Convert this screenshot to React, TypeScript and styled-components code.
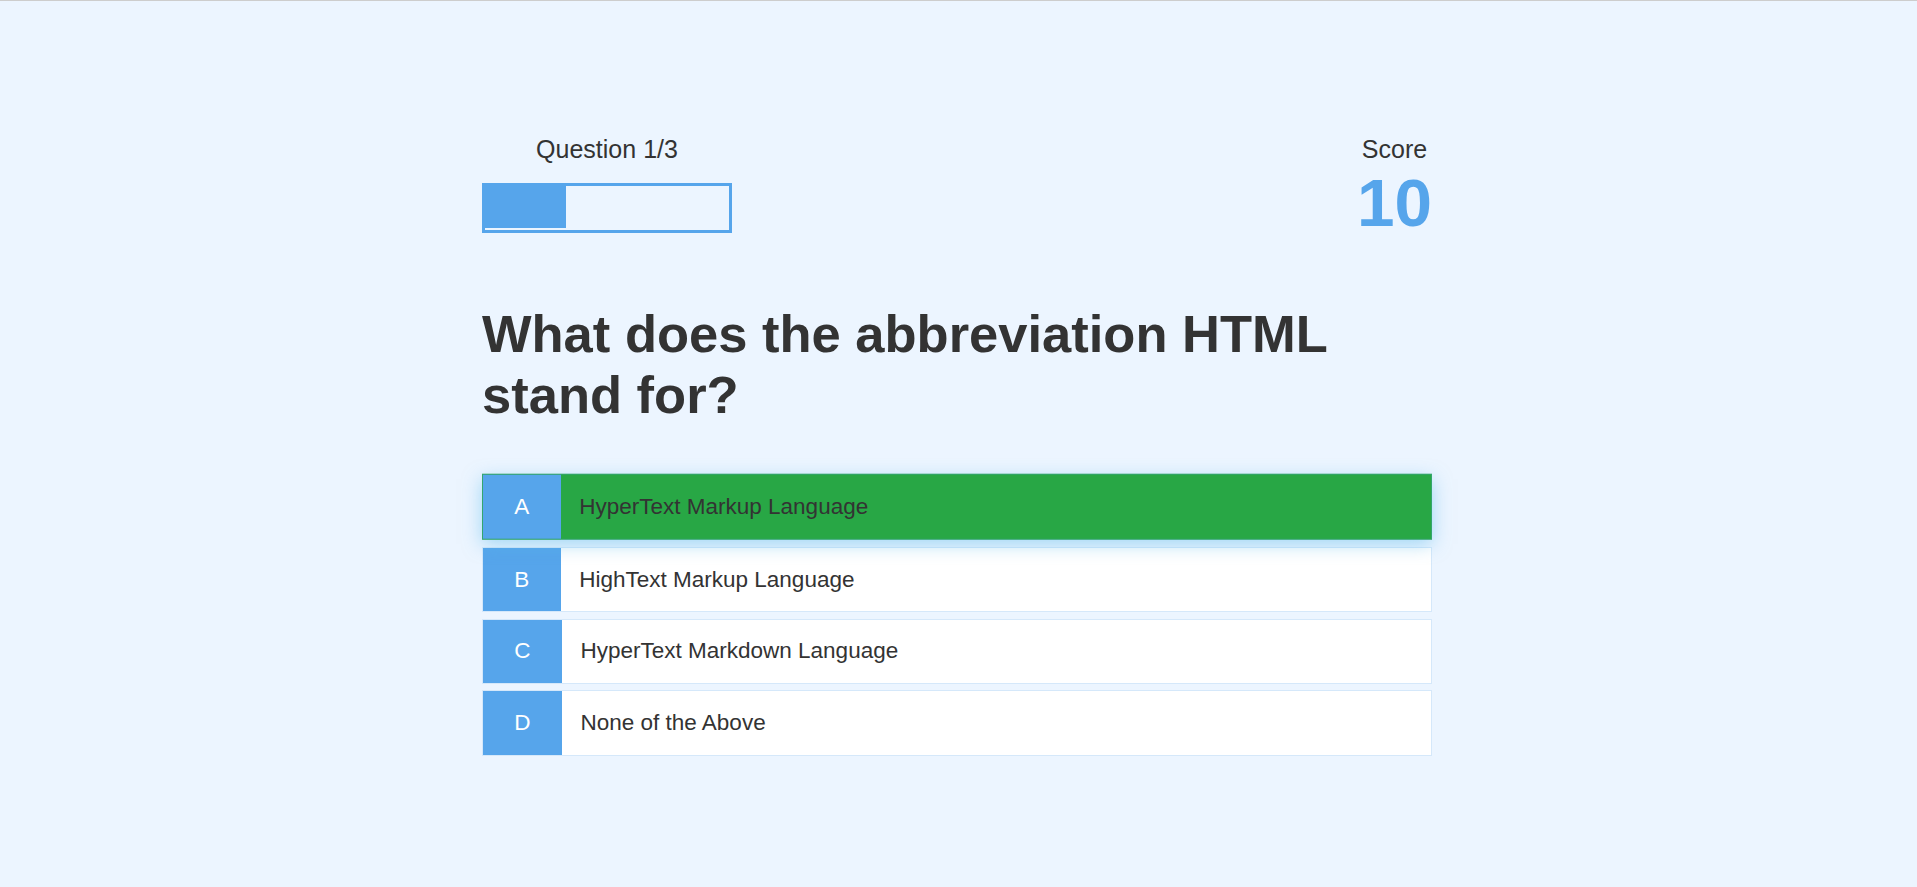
import React from "react";
import styled, { createGlobalStyle } from "styled-components";

const GlobalStyle = createGlobalStyle`
  * { box-sizing: border-box; margin: 0; padding: 0; }
  html, body { background: #ecf5ff; }
  body {
    font-family: "Liberation Sans", Arial, Helvetica, sans-serif;
    color: #333;
  }
`;

const Page = styled.div`
  min-height: 100vh;
  background: #ecf5ff;
  border-top: 1px solid #cdcdcd;
`;

const Container = styled.main`
  width: 1000px;
  margin: 0 0 0 calc(50% - 501.5px);
  padding: 134px 25px 25px;
  display: flex;
  flex-direction: column;
`;

const Hud = styled.header`
  display: flex;
  justify-content: space-between;
  align-items: flex-start;
`;

const HudItem = styled.div`
  display: flex;
  flex-direction: column;
  align-items: center;
`;

const HudPrefix = styled.p`
  font-size: 25px;
  text-align: center;
  color: #333;
`;

const ProgressBar = styled.div`
  width: 250px;
  height: 50px;
  margin-top: 18.75px;
  border: 3px solid #56a5eb;
`;

const ProgressFill = styled.div`
  height: 42.5px;
  background: #56a5eb;
`;

const Score = styled.h1`
  font-size: 67.5px;
  font-weight: 700;
  color: #56a5eb;
  text-align: center;
`;

const Question = styled.h2`
  margin-top: 62px;
  margin-bottom: 50px;
  font-size: 52.5px;
  font-weight: 700;
  color: #333;
`;

const Choices = styled.ul`
  list-style: none;
  display: flex;
  flex-direction: column;
`;

const Choice = styled.li<{ $state?: "correct" | "incorrect"; $hover?: boolean }>`
  display: flex;
  width: 100%;
  margin-bottom: 6.25px;
  font-size: 22.5px;
  border: 1px solid rgba(86, 165, 235, 0.25);
  background: ${(p) =>
    p.$state === "correct" ? "#28a745" : p.$state === "incorrect" ? "#dc3545" : "#ffffff"};
  cursor: pointer;
  ${(p) =>
    p.$hover
      ? `box-shadow: 0 5px 17.5px 0 rgba(86, 185, 235, 0.5); transform: translateY(-1.25px);`
      : ""}
`;

const ChoicePrefix = styled.span`
  padding: 18.75px 31.25px;
  background: #56a5eb;
  color: #fff;
`;

const ChoiceText = styled.span`
  padding: 18.75px;
  width: 100%;
  color: #333;
`;

const choices = [
  { letter: "A", text: "HyperText Markup Language", state: "correct" as const, hover: true },
  { letter: "B", text: "HighText Markup Language" },
  { letter: "C", text: "HyperText Markdown Language" },
  { letter: "D", text: "None of the Above" },
];

export default function App() {
  const current = 1;
  const total = 3;
  return (
    <Page>
      <GlobalStyle />
      <Container>
        <Hud>
          <HudItem>
            <HudPrefix>
              Question {current}/{total}
            </HudPrefix>
            <ProgressBar>
              <ProgressFill style={{ width: `${(current / total) * 100}%` }} />
            </ProgressBar>
          </HudItem>
          <HudItem>
            <HudPrefix>Score</HudPrefix>
            <Score>10</Score>
          </HudItem>
        </Hud>
        <Question>What does the abbreviation HTML stand for?</Question>
        <Choices>
          {choices.map((c) => (
            <Choice key={c.letter} $state={c.state} $hover={c.hover}>
              <ChoicePrefix>{c.letter}</ChoicePrefix>
              <ChoiceText>{c.text}</ChoiceText>
            </Choice>
          ))}
        </Choices>
      </Container>
    </Page>
  );
}
